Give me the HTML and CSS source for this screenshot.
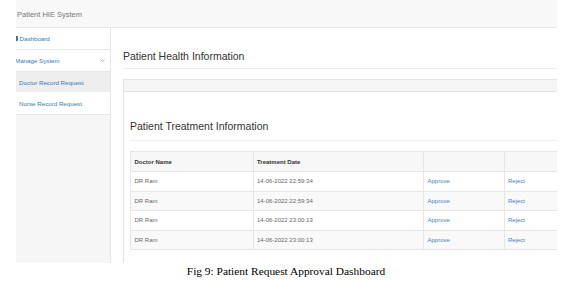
FILE: index.html
```html
<!DOCTYPE html>
<html lang="en">
<head>
    <meta charset="UTF-8">
    <title>Patient Request Approval Dashboard</title>
    <link rel="stylesheet" href="styles.css">
</head>
<body>
    <!-- cropped screenshot of the dashboard -->
    <div class="shot">
        <nav class="topbar">
            <span class="brand">Patient HIE System</span>
        </nav>
        <div class="layout">
            <aside class="sidebar">
                <ul class="menu">
                    <li class="item">
                        <a href="#" class="link"><span class="icon"></span>Dashboard</a>
                    </li>
                    <li class="item">
                        <a href="#" class="link manage"><span class="icon hidden-icon"></span>Manage System
                            <svg class="caret" width="5" height="3" viewBox="0 0 5 3"><path d="M0.5 0.5 L2.5 2.5 L4.5 0.5" fill="none" stroke="#aaa" stroke-width="0.8"/></svg>
                        </a>
                    </li>
                    <li class="item sub active"><a href="#" class="link">Doctor Record Request</a></li>
                    <li class="item sub"><a href="#" class="link">Nurse Record Request</a></li>
                </ul>
            </aside>
            <main class="page">
                <h1 class="page-header">Patient Health Information</h1>
                <div class="panel">
                    <div class="panel-heading"></div>
                    <div class="panel-body">
                        <h2 class="sub-header">Patient Treatment Information</h2>
                        <table class="records">
                            <thead>
                                <tr><th class="c1">Doctor Name</th><th class="c2">Treatment Date</th><th class="c3"></th><th class="c4"></th></tr>
                            </thead>
                            <tbody>
                                <tr><td>DR Ram</td><td>14-06-2022 22:59:34</td><td><a href="#">Approve</a></td><td><a href="#">Reject</a></td></tr>
                                <tr><td>DR Ram</td><td>14-06-2022 22:59:34</td><td><a href="#">Approve</a></td><td><a href="#">Reject</a></td></tr>
                                <tr><td>DR Ram</td><td>14-06-2022 23:00:13</td><td><a href="#">Approve</a></td><td><a href="#">Reject</a></td></tr>
                                <tr><td>DR Ram</td><td>14-06-2022 23:00:13</td><td><a href="#">Approve</a></td><td><a href="#">Reject</a></td></tr>
                            </tbody>
                        </table>
                    </div>
                </div>
            </main>
        </div>
    </div>
    <p class="caption">Fig 9: Patient Request Approval Dashboard</p>
</body>
</html>
```

FILE: styles.css
```css
body {
    margin: 0;
    background-color: white;
    font-family: "Liberation Sans", Arial, sans-serif;
}
.shot {
    margin-left: 16px;
    width: 541px;
    height: 263px;
    overflow: hidden;
    background-color: white;
}
.topbar {
    height: 27px;
    background-color: #f8f8f8;
    border-bottom: 1px solid #e7e7e7;
    display: flex;
    align-items: center;
}
.brand {
    margin-left: 1px;
    font-size: 7.5px;
    color: #777;
    white-space: nowrap;
    padding-top: 2px;
}
.layout {
    display: flex;
    height: 235px;
}
.sidebar {
    width: 94px;
    flex: none;
    background-color: #f6f6f6;
    border-right: 1px solid #e7e7e7;
}
.menu {
    list-style: none;
    margin: 0;
    padding: 0;
}
.item {
    background-color: white;
    border-bottom: 1px solid #e7e7e7;
}
.item.sub {
    border-bottom: none;
}
.item.sub:last-child {
    border-bottom: 1px solid #e7e7e7;
}
.item.active {
    background-color: #eeeeee;
}
.link {
    display: flex;
    align-items: center;
    height: 21px;
    font-size: 6.2px;
    color: #337ab7;
    text-decoration: none;
    white-space: nowrap;
}
.item.sub .link {
    height: 20px;
    padding-left: 3px;
}
.item.sub:last-child .link {
    height: 22px;
}
.icon {
    width: 5px;
    height: 5px;
    margin-left: -3px;
    margin-right: 1.5px;
    background-color: #337ab7;
    border-radius: 1px;
}
.hidden-icon {
    margin-left: -8px;
    margin-right: 2px;
    background-color: transparent;
}
.manage {
    position: relative;
}
.caret {
    position: absolute;
    left: 84px;
    top: 9px;
}
.page {
    width: 480px;
    flex: none;
    padding-left: 12px;
}
.page-header {
    margin: 21px 0 10px 0;
    padding-bottom: 4px;
    font-size: 10.5px;
    line-height: 15px;
    font-weight: normal;
    color: #333;
    border-bottom: 1px solid #eee;
}
.panel {
    border: 1px solid #e3e3e3;
    height: 200px;
}
.panel-heading {
    height: 11px;
    background-color: #f5f5f5;
    border-bottom: 1px solid #e3e3e3;
}
.panel-body {
    padding: 27px 0 0 6px;
}
.sub-header {
    margin: 0 0 10px 0;
    padding-bottom: 6px;
    font-size: 10.5px;
    line-height: 15px;
    font-weight: normal;
    color: #333;
    border-bottom: 1px solid #f0f0f0;
}
.records {
    border-collapse: collapse;
    font-size: 6px;
    color: #666;
}
.records th, .records td {
    border: 1px solid #e6e6e6;
    text-align: left;
    padding: 0 0 0 3.5px;
    white-space: nowrap;
}
.records th {
    height: 19px;
    font-weight: bold;
    color: #333;
    background-color: #f7f7f7;
}
.records td {
    height: 18.5px;
}
.records tbody tr:nth-child(even) td {
    background-color: #f9f9f9;
}
.records a {
    color: #4a7fbb;
    text-decoration: none;
}
.c1 { width: 118px; }
.c2 { width: 166px; }
.c3 { width: 76px; }
.c4 { width: 76px; }
.caption {
    margin: 0;
    padding-top: 2px;
    text-align: center;
    font-family: "Liberation Serif", "Times New Roman", serif;
    font-size: 11.4px;
    line-height: 13px;
    color: black;
}
```
